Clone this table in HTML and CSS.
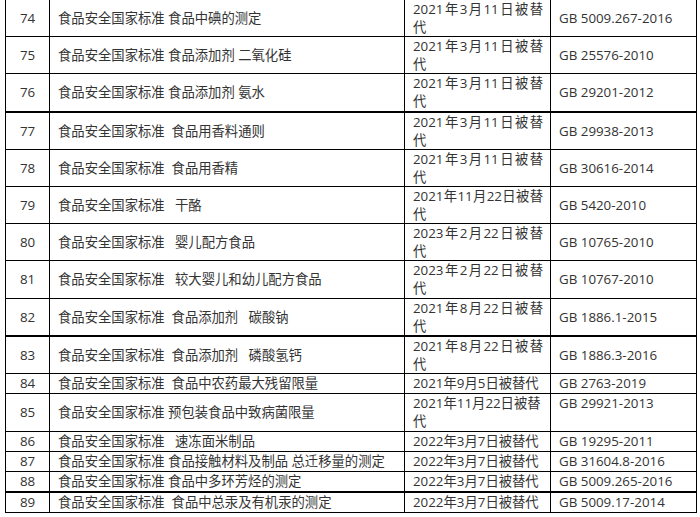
FILE: index.html
```html
<!DOCTYPE html>
<html lang="zh-CN">
<head>
<meta charset="utf-8">
<link rel="stylesheet" href="styles.css">
</head>
<body>
<table class="std">
  <colgroup>
    <col class="c-no">
    <col class="c-name">
    <col class="c-date">
    <col class="c-code">
  </colgroup>
  <tbody>
    <tr><td class="no">74</td><td class="name">食品安全国家标准 食品中碘的测定</td><td class="date">2021年3月11日被替代</td><td class="code">GB 5009.267-2016</td></tr>
    <tr><td class="no">75</td><td class="name">食品安全国家标准 食品添加剂 二氧化硅</td><td class="date">2021年3月11日被替代</td><td class="code">GB 25576-2010</td></tr>
    <tr class="thick"><td class="no">76</td><td class="name">食品安全国家标准 食品添加剂 氨水</td><td class="date">2021年3月11日被替代</td><td class="code">GB 29201-2012</td></tr>
    <tr><td class="no">77</td><td class="name">食品安全国家标准&nbsp; 食品用香料通则</td><td class="date">2021年3月11日被替代</td><td class="code">GB 29938-2013</td></tr>
    <tr><td class="no">78</td><td class="name">食品安全国家标准&nbsp; 食品用香精</td><td class="date">2021年3月11日被替代</td><td class="code">GB 30616-2014</td></tr>
    <tr><td class="no">79</td><td class="name">食品安全国家标准&nbsp;&nbsp; 干酪</td><td class="date">2021年11月22日被替代</td><td class="code">GB 5420-2010</td></tr>
    <tr><td class="no">80</td><td class="name">食品安全国家标准&nbsp;&nbsp; 婴儿配方食品</td><td class="date">2023年2月22日被替代</td><td class="code">GB 10765-2010</td></tr>
    <tr><td class="no">81</td><td class="name">食品安全国家标准&nbsp;&nbsp; 较大婴儿和幼儿配方食品</td><td class="date">2023年2月22日被替代</td><td class="code">GB 10767-2010</td></tr>
    <tr class="thick"><td class="no">82</td><td class="name">食品安全国家标准&nbsp; 食品添加剂&nbsp;&nbsp; 碳酸钠</td><td class="date">2021年8月22日被替代</td><td class="code">GB 1886.1-2015</td></tr>
    <tr><td class="no">83</td><td class="name">食品安全国家标准&nbsp; 食品添加剂&nbsp;&nbsp; 磷酸氢钙</td><td class="date">2021年8月22日被替代</td><td class="code">GB 1886.3-2016</td></tr>
    <tr class="single"><td class="no">84</td><td class="name">食品安全国家标准&nbsp; 食品中农药最大残留限量</td><td class="date plain">2021年9月5日被替代</td><td class="code">GB 2763-2019</td></tr>
    <tr class="mid"><td class="no">85</td><td class="name">食品安全国家标准 预包装食品中致病菌限量</td><td class="date plain">2021年11月22日被替代</td><td class="code top">GB 29921-2013</td></tr>
    <tr class="single"><td class="no">86</td><td class="name">食品安全国家标准&nbsp;&nbsp; 速冻面米制品</td><td class="date plain">2022年3月7日被替代</td><td class="code">GB 19295-2011</td></tr>
    <tr class="single"><td class="no">87</td><td class="name">食品安全国家标准 食品接触材料及制品 总迁移量的测定</td><td class="date plain">2022年3月7日被替代</td><td class="code">GB 31604.8-2016</td></tr>
    <tr class="single thick"><td class="no">88</td><td class="name">食品安全国家标准 食品中多环芳烃的测定</td><td class="date plain">2022年3月7日被替代</td><td class="code">GB 5009.265-2016</td></tr>
    <tr class="single"><td class="no">89</td><td class="name">食品安全国家标准&nbsp; 食品中总汞及有机汞的测定</td><td class="date plain">2022年3月7日被替代</td><td class="code">GB 5009.17-2014</td></tr>
  </tbody>
</table>
</body>
</html>
```

FILE: styles.css
```css
html, body {
  margin: 0;
  padding: 0;
  background: #ffffff;
}

body {
  font-family: "Open Sans", "Noto Sans CJK SC", sans-serif;
  font-size: 13.33px;
  color: #333333;
}

.std {
  border-collapse: collapse;
  table-layout: fixed;
  width: 691px;
  margin: -1px 0 0 5px;
}

.c-no { width: 44px; }
.c-name { width: 355px; }
.c-date { width: 146px; }
.c-code { width: 146px; }

.std td {
  border: 1px solid #000000;
  padding: 0 7px 0 8px;
  line-height: 18.1px;
  vertical-align: middle;
  white-space: normal;
  word-break: break-all;
}

.std tr.single td {
  line-height: 19px;
}

.std tr.mid td {
  line-height: 18.5px;
}

.std tr.thick td {
  border-bottom: 2px solid #000000;
}

.std td.no {
  text-align: center;
  padding: 0;
}

.std td.name {
  white-space: nowrap;
  overflow: hidden;
}

.std td.date {
  text-align: justify;
  text-align-last: left;
}

.std td.date.plain {
  text-align: left;
}

.std td.code {
  white-space: nowrap;
}

.std td.code.top {
  vertical-align: top;
}
```
